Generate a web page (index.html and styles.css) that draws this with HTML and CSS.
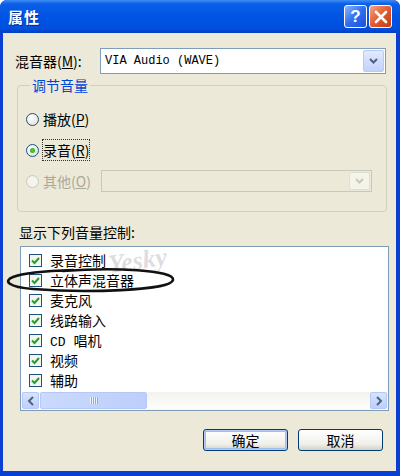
FILE: index.html
```html
<!DOCTYPE html>
<html lang="zh-CN">
<head>
    <meta charset="UTF-8" />
    <title>属性</title>
    <link rel="stylesheet" href="styles.css">
</head>
<body>
    <div class="window">
        <div class="titlebar">
            <span class="title">属性</span>
            <div class="caption-btns">
                <span class="cap-btn help">?</span>
                <span class="cap-btn close">
                    <svg width="14" height="14" viewBox="0 0 14 14">
                        <path d="M2 2 L12 12 M12 2 L2 12" stroke="#fff" stroke-width="2.6" stroke-linecap="round" />
                    </svg>
                </span>
            </div>
        </div>

        <div class="client">
            <div class="mixer-row">
                <span class="label">混音器(<u>M</u>):</span>
                <div class="combo">
                    <span class="combo-text">VIA Audio (WAVE)</span>
                    <span class="combo-arrow">
                        <svg width="9" height="6" viewBox="0 0 9 6"><path d="M1 1 L4.5 4.5 L8 1" stroke="#4d6185" stroke-width="2" fill="none" /></svg>
                    </span>
                </div>
            </div>

            <fieldset class="group">
                <legend>调节音量</legend>
                <div class="radio-row">
                    <span class="radio"></span>
                    <span>播放(<u>P</u>)</span>
                </div>
                <div class="radio-row">
                    <span class="radio checked"></span>
                    <span class="focused">录音(<u>R</u>)</span>
                </div>
                <div class="radio-row disabled">
                    <span class="radio"></span>
                    <span class="other-label">其他(<u>O</u>)</span>
                    <div class="combo combo-disabled">
                        <span class="combo-text"></span>
                        <span class="combo-arrow">
                            <svg width="9" height="6" viewBox="0 0 9 6"><path d="M1 1 L4.5 4.5 L8 1" stroke="#c9c7ba" stroke-width="2" fill="none" /></svg>
                        </span>
                    </div>
                </div>
            </fieldset>

            <div class="list-label">显示下列音量控制:</div>
            <div class="listbox">
                <div class="items">
                    <div class="item"><span class="check"></span>录音控制</div>
                    <div class="item"><span class="check"></span>立体声混音器</div>
                    <div class="item"><span class="check"></span>麦克风</div>
                    <div class="item"><span class="check"></span>线路输入</div>
                    <div class="item"><span class="check"></span><span><span class="mono">CD </span>唱机</span></div>
                    <div class="item"><span class="check"></span>视频</div>
                    <div class="item"><span class="check"></span>辅助</div>
                </div>
                <div class="hscroll">
                    <span class="sb-btn">
                        <svg width="8" height="10" viewBox="0 0 8 10"><path d="M6 1 L2 5 L6 9" stroke="#4d6185" stroke-width="2" fill="none" /></svg>
                    </span>
                    <div class="sb-track">
                        <span class="sb-thumb"><span class="grip"></span></span>
                    </div>
                    <span class="sb-btn">
                        <svg width="8" height="10" viewBox="0 0 8 10"><path d="M2 1 L6 5 L2 9" stroke="#4d6185" stroke-width="2" fill="none" /></svg>
                    </span>
                </div>
            </div>

            <div class="buttons">
                <button class="btn default">确定</button>
                <button class="btn">取消</button>
            </div>
        </div>

        <!-- hand-drawn mark and watermark on the screenshot -->
        <span class="watermark">Yesky</span>
        <svg class="mark" width="180" height="30" viewBox="0 0 180 30">
            <path d="M60 5 C 110 1, 172 4, 170 14 C 168 25, 80 27, 30 23 C 5 21, 0 15, 10 11 C 20 7, 40 5, 70 4"
                  stroke="#111" stroke-width="2.6" fill="none" stroke-linecap="round" />
        </svg>
    </div>
</body>
</html>
```

FILE: styles.css
```css
body {
    margin: 0;
    font-family: "Noto Sans CJK SC", sans-serif;
    font-size: 14px;
    color: #000;
    background: #fff;
}

.window {
    position: relative;
    width: 400px;
    height: 476px;
    box-sizing: border-box;
    display: flex;
    flex-direction: column;
    background: #0a3fd6;
    border-radius: 7px 7px 0 0;
    overflow: hidden;
}

.titlebar {
    height: 33px;
    flex: none;
    display: flex;
    align-items: center;
    justify-content: space-between;
    padding: 0 8px 0 8px;
    background: linear-gradient(#3f8cf3 0%, #0a5fe8 12%, #0054e3 50%, #0150e0 85%, #013fc4 100%);
}

.title {
    color: #fff;
    font-weight: bold;
    font-size: 15px;
    letter-spacing: 1px;
    text-shadow: 1px 1px 0 #0a2a8a;
}

.caption-btns {
    display: flex;
    gap: 2px;
}

.cap-btn {
    width: 21px;
    height: 21px;
    border: 1px solid #fff;
    border-radius: 3px;
    display: flex;
    align-items: center;
    justify-content: center;
    color: #fff;
    font-family: "Liberation Sans", sans-serif;
    font-weight: bold;
    font-size: 17px;
}

.help {
    background: linear-gradient(135deg, #8db6fb, #2e6ef0 50%, #1b4fd8);
}

.close {
    background: linear-gradient(135deg, #f2a58a, #e25a2c 50%, #c23c13);
}

.client {
    flex: 1;
    margin: 0 4px 5px 3px;
    background: #ece9d8;
    padding: 15px 10px 0 12px;
    position: relative;
}

.mixer-row {
    display: flex;
    align-items: center;
    height: 26px;
}

.label {
    flex: none;
    width: 85px;
}

u {
    text-decoration: underline;
}

.combo {
    flex: 1;
    height: 26px;
    box-sizing: border-box;
    border: 1px solid #7f9db9;
    background: #fff;
    display: flex;
    align-items: center;
}

.combo-text {
    flex: 1;
    padding-left: 4px;
    font-family: "Liberation Mono", monospace;
    font-size: 12px;
}

.combo-arrow {
    width: 21px;
    height: 22px;
    margin-right: 1px;
    border-radius: 2px;
    background: linear-gradient(#e1eafe, #c1d3fb);
    border: 1px solid #b9cbf3;
    box-sizing: border-box;
    display: flex;
    align-items: center;
    justify-content: center;
}

.group {
    margin: 1px 0 0 2px;
    width: 370px;
    height: 137px;
    box-sizing: border-box;
    border: 1px solid #d0d0bf;
    border-radius: 4px;
    padding: 14px 0 0 8px;
}

.group legend {
    color: #0046d5;
    padding: 0 2px;
    margin-left: 4px;
}

.radio-row {
    display: flex;
    align-items: center;
    gap: 4px;
    height: 20px;
    margin-bottom: 11px;
}

.radio {
    width: 13px;
    height: 13px;
    box-sizing: border-box;
    border-radius: 50%;
    border: 1px solid #1c5180;
    background: radial-gradient(circle at 35% 35%, #fff, #dcdcd4);
    position: relative;
    flex: none;
}

.radio.checked::after {
    content: "";
    position: absolute;
    left: 3px;
    top: 3px;
    width: 5px;
    height: 5px;
    border-radius: 50%;
    background: radial-gradient(#5ccd3c, #21a121);
}

.focused {
    outline: 1px dotted #333;
}

.disabled {
    color: #aca899;
    margin-top: 3px;
}

.disabled .radio {
    border-color: #cac8bb;
    background: #f4f3ee;
}

.other-label {
    width: 54px;
    flex: none;
}

.combo-disabled {
    flex: none;
    width: 271px;
    height: 22px;
    border-color: #c9c7ba;
    background: #ece9d8;
}

.combo-disabled .combo-arrow {
    height: 18px;
    background: #f5f4ea;
    border-color: #e0dfd3;
}

.list-label {
    margin: 10px 0 0 4px;
    height: 22px;
}

.listbox {
    margin: 2px 0 0 5px;
    width: 369px;
    height: 165px;
    box-sizing: border-box;
    border: 1px solid #7f9db9;
    background: #fff;
    display: flex;
    flex-direction: column;
}

.items {
    flex: 1;
    padding: 3px 0 0 8px;
}

.item {
    display: flex;
    align-items: center;
    gap: 8px;
    height: 20px;
}

.mono {
    font-family: "Liberation Mono", monospace;
    font-size: 13px;
    white-space: pre;
}

.check {
    width: 13px;
    height: 13px;
    box-sizing: border-box;
    border: 1px solid #1c5180;
    background: #f4f4f0 url("data:image/svg+xml,%3Csvg xmlns='http://www.w3.org/2000/svg' width='11' height='11'%3E%3Cpath d='M2 5.5 L4.5 8 L9 3' stroke='%2321a121' stroke-width='2' fill='none'/%3E%3C/svg%3E") center no-repeat;
    flex: none;
}

.hscroll {
    height: 17px;
    display: flex;
    padding: 0 1px 1px 1px;
    background: #f7f7f4;
}

.sb-btn {
    width: 17px;
    height: 17px;
    box-sizing: border-box;
    border: 1px solid #b6c9f6;
    border-radius: 2px;
    background: linear-gradient(#d8e4fd, #bcd0fa);
    display: flex;
    align-items: center;
    justify-content: center;
}

.sb-track {
    flex: 1;
    background: linear-gradient(#f3f3ee, #fdfdfa);
    padding-left: 1px;
}

.sb-thumb {
    display: flex;
    align-items: center;
    justify-content: center;
    width: 107px;
    height: 17px;
    box-sizing: border-box;
    border: 1px solid #b6c9f6;
    border-radius: 2px;
    background: linear-gradient(90deg, #cbdafd, #bccffb);
}

.grip {
    width: 8px;
    height: 7px;
    background: repeating-linear-gradient(90deg, #eef3fe 0 1px, #8fa9e6 1px 2px);
}

.buttons {
    display: flex;
    justify-content: flex-end;
    gap: 10px;
    margin: 18px 3px 0 0;
}

.btn {
    width: 85px;
    height: 22px;
    font-family: "Noto Sans CJK SC", sans-serif;
    font-size: 14px;
    padding: 0;
    line-height: 18px;
    border: 1px solid #003c74;
    border-radius: 3px;
    background: linear-gradient(#fff, #f0f0ea 70%, #d6d0c5);
}

.btn.default {
    box-shadow: inset 0 0 0 1px #b6ccf4, inset 0 0 0 2px #a1bdf0;
}

.watermark {
    position: absolute;
    left: 108px;
    top: 246px;
    font-family: "Liberation Serif", serif;
    font-style: italic;
    font-weight: bold;
    font-size: 26px;
    color: rgba(120, 120, 130, 0.25);
    transform: rotate(-8deg);
}

.mark {
    position: absolute;
    left: 3px;
    top: 266px;
}
```
